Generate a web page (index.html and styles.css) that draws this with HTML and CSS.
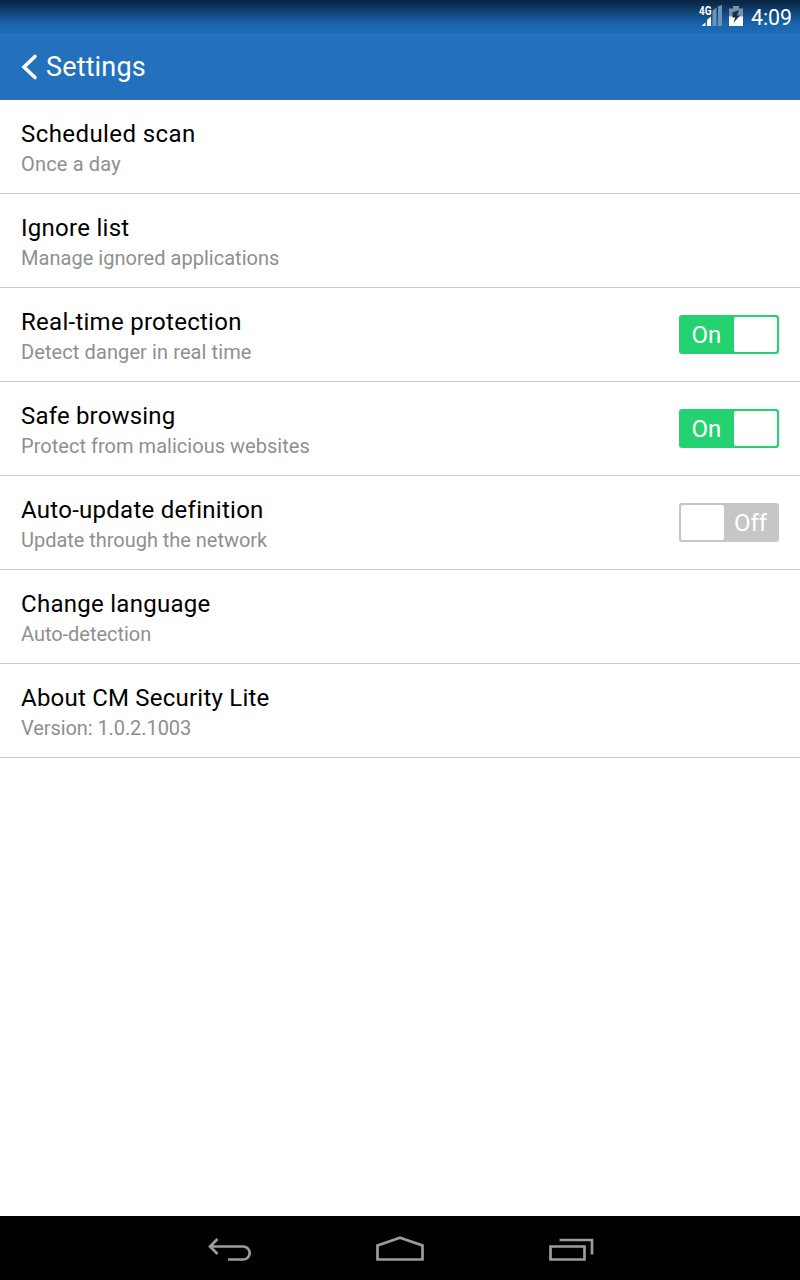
FILE: index.html
```html
<!DOCTYPE html>
<html lang="en">
<head>
<meta charset="utf-8">
<title>Settings</title>
<link rel="stylesheet" href="styles.css">
</head>
<body>
<div class="screen">
  <div class="status">
    <svg class="signal" width="26" height="25" viewBox="0 0 26 25">
      <g fill="#6d95b3"><path d="M15.500 8.500l4-3V24h-4z"/><path d="M21 4.500l4-1.500v21h-4z"/></g>
      <path fill="#fff" d="M4.500 24l4-3.500V24zM10 18l4-3.500V24h-4z"/>
      <text x="2" y="13" class="net" textLength="12.5" lengthAdjust="spacingAndGlyphs">4G</text>
    </svg>
    <svg class="battery" width="14" height="21" viewBox="0 0 14 21">
      <path fill="#7892a5" d="M4 0h6v2.500h4V11H0V2.500h4z"/>
      <path fill="#fff" d="M0 10.500h14V20H0z"/>
      <path fill="#17334b" d="M10 4L3.500 6.500V11.500H6.300L4.300 17L11 9.500H8z"/>
    </svg>
    <span class="time">4:09</span>
  </div>
  <header class="bar">
    <svg class="chevron" width="18" height="28" viewBox="0 0 18 28"><path d="M15 3.500L4 14L15 24.500" fill="none" stroke="#fff" stroke-width="3.600" stroke-linecap="round" stroke-linejoin="miter"/></svg>
    <h1 class="heading">Settings</h1>
  </header>
  <main class="list">
    <div class="row"><div class="label"><div class="title"><span>Scheduled scan</span></div><div class="sub"><span>Once a day</span></div></div></div>
    <div class="row"><div class="label"><div class="title"><span>Ignore list</span></div><div class="sub"><span>Manage ignored applications</span></div></div></div>
    <div class="row"><div class="label"><div class="title"><span>Real-time protection</span></div><div class="sub"><span>Detect danger in real time</span></div></div><div class="switch on"><span class="state">On</span><span class="knob"></span></div></div>
    <div class="row"><div class="label"><div class="title"><span>Safe browsing</span></div><div class="sub"><span>Protect from malicious websites</span></div></div><div class="switch on"><span class="state">On</span><span class="knob"></span></div></div>
    <div class="row"><div class="label"><div class="title"><span>Auto-update definition</span></div><div class="sub"><span>Update through the network</span></div></div><div class="switch off"><span class="knob"></span><span class="state">Off</span></div></div>
    <div class="row"><div class="label"><div class="title"><span>Change language</span></div><div class="sub"><span>Auto-detection</span></div></div></div>
    <div class="row"><div class="label"><div class="title"><span>About CM Security Lite</span></div><div class="sub"><span>Version: 1.0.2.1003</span></div></div></div>
  </main>
  <nav class="nav">
    <svg width="60" height="64" viewBox="0 0 60 64"><path d="M17.500 23L10 30.500L17.500 38M10 30.500H43.200a6.500 6.500 0 0 1 0 13H28" /></svg>
    <svg width="60" height="64" viewBox="0 0 60 64"><path d="M7.500 29.500L30 21.700L52.500 29.500V43.500H7.500z"/></svg>
    <svg width="60" height="64" viewBox="0 0 60 64"><path d="M10.500 30.500h34v13h-34zM19.500 24h32.500v14.500"/></svg>
  </nav>
</div>
</body>
</html>
```
FILE: styles.css
```css
* { box-sizing: border-box; }
body { margin: 0; background: #fff; font-family: Roboto, "Noto Sans", sans-serif; }
.screen { display: flex; flex-direction: column; height: 1280px; width: 800px; }
.status {
  height: 33px; display: flex; justify-content: flex-end; align-items: flex-start;
  padding-right: 8px; color: #fff;
  background: linear-gradient(#082640 0, #09294a 3px, #104577 12px, #1a65ad 24px, #1a6cb6 33px);
}
.signal { margin: 2px 6px 0 0; }
.net { font: 700 12.500px Roboto, sans-serif; fill: #fff; }
.battery { margin: 6px 8px 0 0; }
.time { font-size: 21.300px; line-height: 36px; }
.bar { height: 67px; background: #2371bc; display: flex; align-items: center; padding-left: 20px; color: #fff; }
.chevron { margin-right: 8px; }
.heading { margin: 0; font-size: 27px; font-weight: 400; line-height: 32px; letter-spacing: .15px; }
.list { flex: 1; }
.row {
  height: 94px; border-bottom: 1px solid #ccc; padding: 0 21px;
  display: flex; align-items: center; justify-content: space-between;
}
.label { padding-top: 2px; }
.title { font-size: 24px; line-height: 32px; color: #000; letter-spacing: .27px; }
.sub { font-size: 20px; line-height: 28px; color: #8f8f8f; letter-spacing: .03px; }
.row:nth-child(1) .title { letter-spacing: .42px; }
.row:nth-child(1) .sub { letter-spacing: .17px; }
.row:nth-child(3) .sub { letter-spacing: .1px; }
.row:nth-child(4) .title { letter-spacing: .18px; }
.row:nth-child(5) .sub, .row:nth-child(6) .sub { letter-spacing: -.03px; }
.row:nth-child(7) .title { letter-spacing: .22px; }
.row:nth-child(7) .sub { letter-spacing: -.08px; }
.switch { width: 100px; height: 39px; border-radius: 3px; padding: 2px; display: flex; color: #fff; }
.on { background: #24d272; }
.off { background: #c6c6c6; }
.knob { width: 43px; background: #fff; border-radius: 2px; }
.state { flex: 1; text-align: center; font-size: 24px; line-height: 36px; }
.on .state { padding-right: 2px; }
.nav { height: 64px; background: #000; display: flex; justify-content: center; gap: 110px; }
.nav path { fill: none; stroke: #9c9c9c; stroke-width: 2.700; }
```
